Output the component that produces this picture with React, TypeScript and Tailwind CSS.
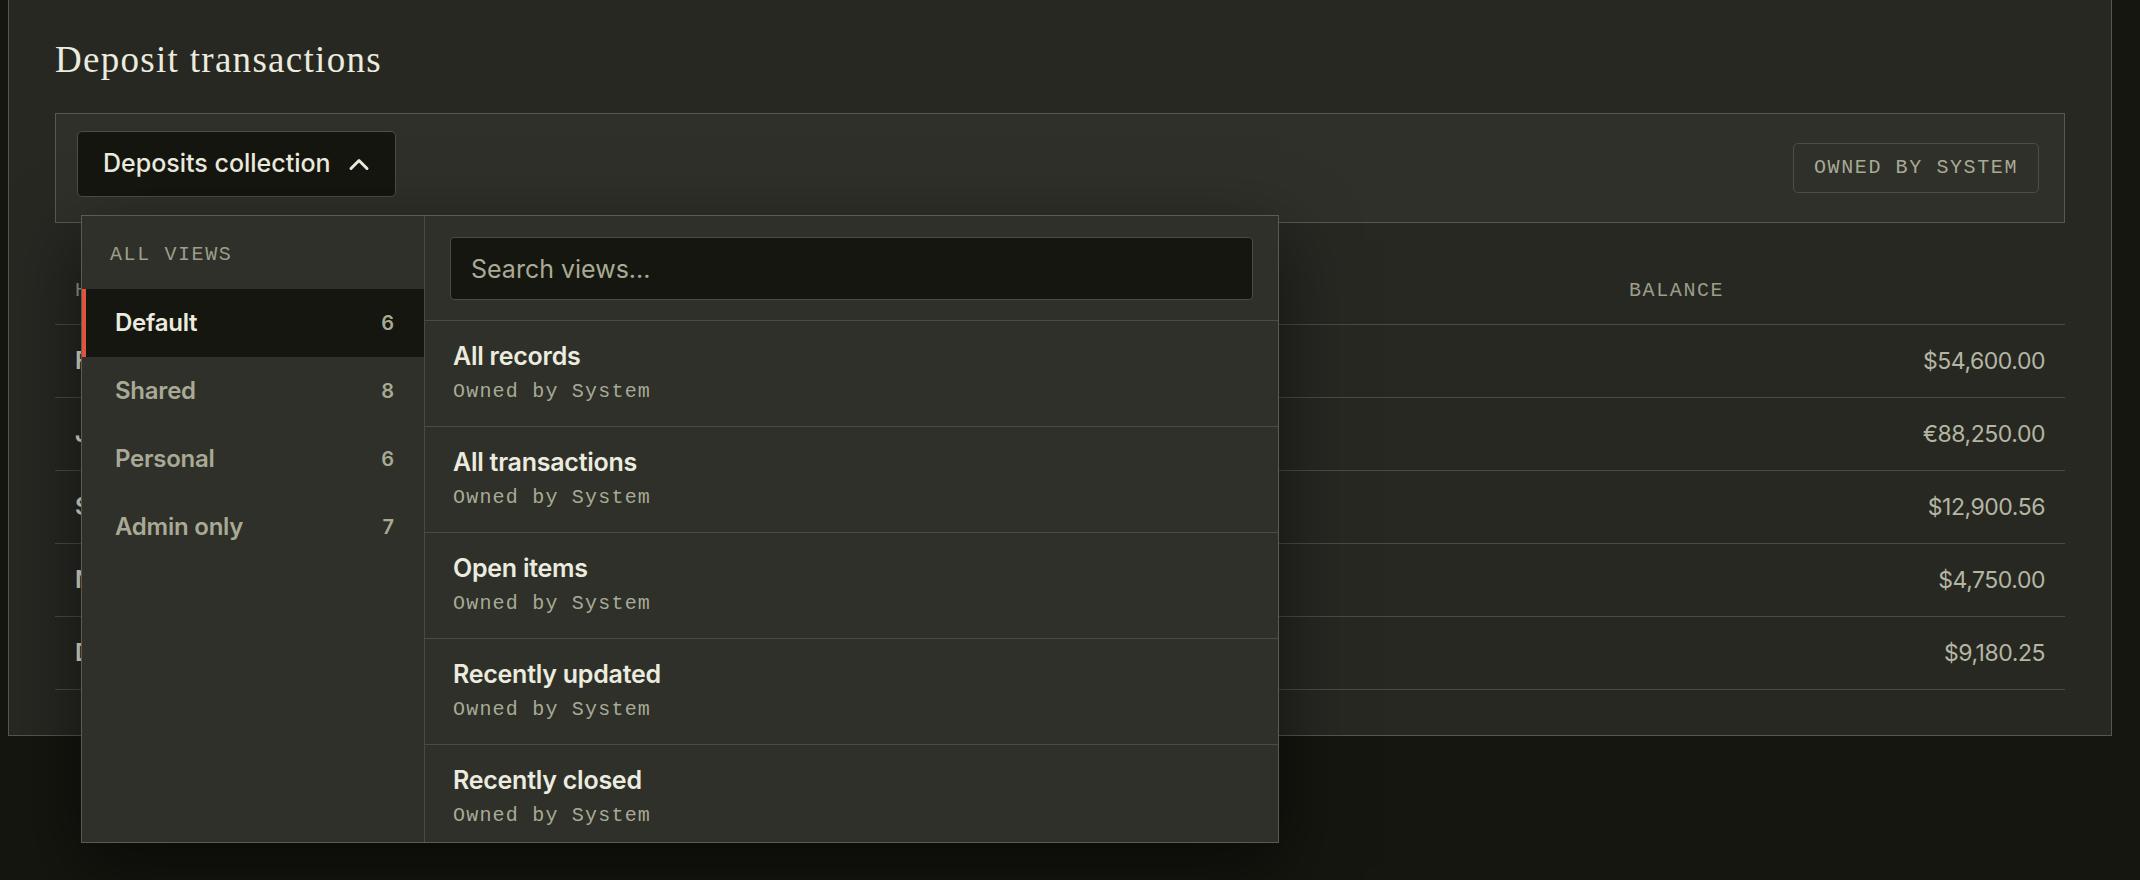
import { useState } from 'react';

const viewGroups = [
  { name: 'Default', count: 6 },
  { name: 'Shared', count: 8 },
  { name: 'Personal', count: 6 },
  { name: 'Admin only', count: 7 },
];

const savedViews = [
  'All records',
  'All transactions',
  'Open items',
  'Recently updated',
  'Recently closed',
  'Archived',
];

const deposits = [
  { holder: 'Fairview Holdings', account: 'ACC-10482', opened: '2023-04-11', balance: '$54,600.00' },
  { holder: 'Juniper Partners', account: 'ACC-10517', opened: '2023-06-02', balance: '€88,250.00' },
  { holder: 'Summit Trust', account: 'ACC-10533', opened: '2023-09-19', balance: '$12,900.56' },
  { holder: 'Northwind Capital', account: 'ACC-10601', opened: '2024-01-08', balance: '$4,750.00' },
  { holder: 'Delta Reserve', account: 'ACC-10644', opened: '2024-02-27', balance: '$9,180.25' },
];

function ChevronUp() {
  return (
    <svg width="22" height="14" viewBox="0 0 22 14" fill="none" aria-hidden="true">
      <polyline
        points="3,11.5 11,3.5 19,11.5"
        stroke="#ecebdf"
        strokeWidth="3"
        strokeLinecap="round"
        strokeLinejoin="round"
      />
    </svg>
  );
}

function ViewsMenu() {
  const [active, setActive] = useState('Default');

  return (
    <div className="absolute left-[26px] top-[102px] z-10 flex h-[628px] w-[1198px] border border-[#5a5c52] bg-[#2e3029] shadow-[0_24px_70px_rgba(0,0,0,0.55)]">
      <div className="w-[343px] shrink-0 border-r border-[#4a4c44]">
        <div className="h-[73px] pl-7 pt-[27px] font-['Liberation_Mono',monospace] text-[20px] leading-6 tracking-[0.08em] text-[#9c9e8b]">
          ALL VIEWS
        </div>
        {viewGroups.map((g) => {
          const on = g.name === active;
          return (
            <button
              key={g.name}
              type="button"
              onClick={() => setActive(g.name)}
              className={`relative flex h-[68px] w-full items-center justify-between pl-[33px] pr-[30px] text-left ${
                on ? 'bg-[#15160f]' : ''
              }`}
            >
              {on && <span className="absolute inset-y-0 left-0 w-1 bg-[#e0533f]" />}
              <span
                className={`text-[24px] font-semibold tracking-[-0.01em] ${
                  on ? 'text-[#ecebdf]' : 'text-[#a8aa96]'
                }`}
              >
                {g.name}
              </span>
              <span className="text-[20px] font-semibold text-[#a8aa96]">{g.count}</span>
            </button>
          );
        })}
      </div>

      <div className="flex min-w-0 flex-1 flex-col">
        <div className="border-b border-[#4a4c44] px-[25px] pb-5 pt-[21px]">
          <input
            readOnly
            placeholder="Search views..."
            className="h-[63px] w-full rounded-[4px] border border-[#4a4c44] bg-[#15160f] px-5 text-[25px] text-[#ecebdf] outline-none placeholder:text-[#a8aa96]"
          />
        </div>
        <div className="flex-1 overflow-hidden">
          {savedViews.map((v) => (
            <div key={v} className="h-[106px] border-b border-[#4a4c44] px-7 pt-5">
              <div className="text-[25px] font-semibold leading-[30px] tracking-[-0.01em] text-[#ecebdf]">
                {v}
              </div>
              <div className="mt-2 font-['Liberation_Mono',monospace] text-[20px] leading-[26px] tracking-[0.06em] text-[#a8aa96]">
                Owned by System
              </div>
            </div>
          ))}
        </div>
      </div>
    </div>
  );
}

export default function App() {
  return (
    <div className="min-h-screen bg-[#15160f] font-['Inter',sans-serif]">
      <div className="ml-2 mr-[28px] border-x border-b border-[#55574e] bg-[#272822] px-[46px] pb-[45px] pt-[38px]">
        <h1 className="font-['Liberation_Serif',serif] text-[37px] leading-[44px] tracking-[0.035em] text-[#ecebdf]">
          Deposit transactions
        </h1>

        <div className="relative mt-[31px]">
          <div className="flex h-[110px] items-center justify-between border border-[#585a51] bg-[#2e3029] pl-[21px] pr-[25px]">
            <button
              type="button"
              className="mb-2 flex h-[66px] items-center gap-[17px] rounded-[5px] border border-[#4c4e45] bg-[#15160f] px-[25px] text-[25px] font-medium text-[#ecebdf]"
            >
              Deposits collection
              <ChevronUp />
            </button>
            <span className="flex h-[50px] items-center rounded-[5px] border border-[#4c4e45] px-5 font-['Liberation_Mono',monospace] text-[20px] tracking-[0.08em] text-[#a8aa96]">
              OWNED BY SYSTEM
            </span>
          </div>
          <ViewsMenu />
        </div>

        <div className="mt-[34px]">
          <div className="grid h-[68px] grid-cols-[1fr_1fr_1fr_416px] items-center border-b border-[#4a4c44] px-5 font-['Liberation_Mono',monospace] text-[20px] tracking-[0.08em] text-[#9c9e8b]">
            <span>HOLDER</span>
            <span>ACCOUNT</span>
            <span>OPENED</span>
            <span>BALANCE</span>
          </div>
          {deposits.map((d) => (
            <div
              key={d.account}
              className="grid h-[73px] grid-cols-[1fr_1fr_1fr_416px] items-center border-b border-[#4a4c44] px-5"
            >
              <span className="text-[24px] font-semibold text-[#ecebdf]">{d.holder}</span>
              <span className="font-['Liberation_Mono',monospace] text-[20px] text-[#a8aa96]">{d.account}</span>
              <span className="text-[22px] text-[#a8aa96]">{d.opened}</span>
              <span className="text-right text-[23px] tracking-[-0.02em] text-[#b4b6a3]">{d.balance}</span>
            </div>
          ))}
        </div>
      </div>
    </div>
  );
}
